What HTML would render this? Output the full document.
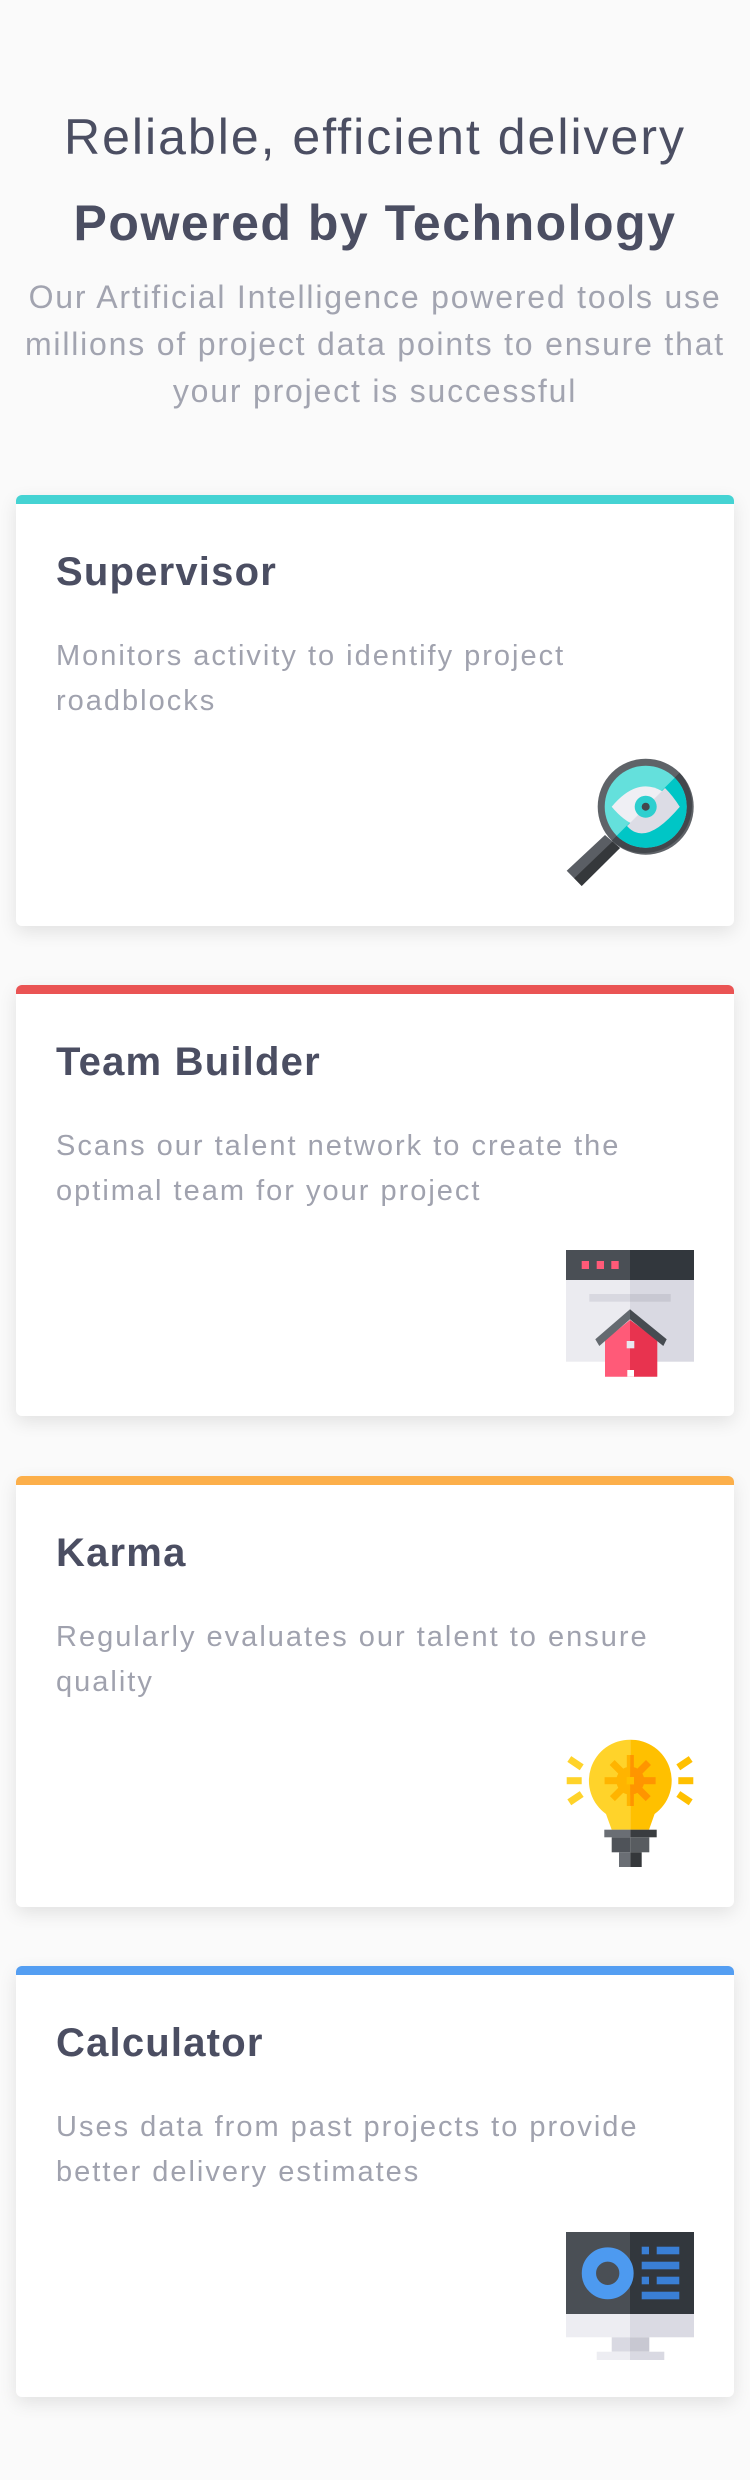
<!DOCTYPE html>
<html><head><meta charset="utf-8"><style>
*{margin:0;padding:0;box-sizing:border-box}
body{width:750px;height:2480px;background:#fafafa;font-family:"Liberation Sans",sans-serif;position:relative;overflow:hidden}
.h1{position:absolute;top:108px;left:0;width:750px;text-align:center;font-size:50px;color:#4b4e62;letter-spacing:2px}
.h2{position:absolute;top:194px;left:0;width:750px;text-align:center;font-size:50px;font-weight:bold;color:#4b4e62;letter-spacing:1.5px}
.p{position:absolute;top:274px;left:0;width:750px;text-align:center;font-size:32px;line-height:47px;color:#a2a4b0;letter-spacing:1.8px;white-space:nowrap}
.card{position:absolute;left:16px;width:718px;height:431px;background:#fff;border-radius:6px;border-top:9px solid;box-shadow:0 6px 18px rgba(0,0,0,0.10)}
.card h3{position:absolute;left:40px;top:46px;font-size:40px;font-weight:bold;color:#4b4e62;letter-spacing:1.2px}
.card p{position:absolute;left:40px;top:130px;width:660px;font-size:29px;line-height:45px;color:#a0a2ae;letter-spacing:2px;white-space:nowrap}
.card svg{position:absolute;left:550px;width:128px;height:128px}
</style></head><body>
<div class="h1">Reliable, efficient delivery</div>
<div class="h2">Powered by Technology</div>
<div class="p">Our Artificial Intelligence powered tools use<br>millions of project data points to ensure that<br>your project is successful</div>

<div class="card" style="top:495px;border-color:#45d3d3">
<h3>Supervisor</h3>
<p>Monitors activity to identify project<br>roadblocks</p>
<svg viewBox="0 0 128 128" style="top:254px">
<polygon points="39,77 54,90 15.7,128 0.7,112.7" fill="#5a5e64"/>
<polygon points="46.5,83.5 54,90 15.7,128 8.2,120.3" fill="#35383b"/>
<circle cx="79.7" cy="48.7" r="48" fill="#5f6368"/>
<path d="M113.6,14.8 A48,48 0 0 1 45.8,82.6 Z" fill="#43474c"/>
<circle cx="79.7" cy="48.7" r="41" fill="#64e0dc"/>
<path d="M108.7,19.7 A41,41 0 0 1 50.7,77.7 Z" fill="#00c6c6"/>
<path d="M45.7,48.7 Q79.7,8 113.7,48.7 Q79.7,89.4 45.7,48.7 Z" fill="#efeff4"/>
<path d="M99,30 Q107,38 113.7,48.7 Q79.7,89.4 61,68 Z" fill="#dcdce5"/>
<circle cx="79.7" cy="48.7" r="11" fill="#2dcfcf"/>
<circle cx="79.7" cy="48.7" r="4" fill="#43474c"/>
</svg>
</div>

<div class="card" style="top:985px;border-color:#ea5454">
<h3>Team Builder</h3>
<p>Scans our talent network to create the<br>optimal team for your project</p>
<svg viewBox="0 0 128 128" style="top:256px">
<rect x="0" y="0" width="64" height="111.7" fill="#ebebf0"/>
<rect x="64" y="0" width="64" height="111.7" fill="#d9d9e2"/>
<rect x="0" y="0" width="64" height="30" fill="#4a4f55"/>
<rect x="64" y="0" width="64" height="30" fill="#32373d"/>
<rect x="15.7" y="11" width="7.3" height="8" fill="#ff5a78"/>
<rect x="30.7" y="11" width="7.3" height="8" fill="#ff5a78"/>
<rect x="45.3" y="11" width="7.4" height="8" fill="#ff5a78"/>
<rect x="23.3" y="44" width="40.7" height="7.7" fill="#d8d8e0"/>
<rect x="64" y="44" width="40.7" height="7.7" fill="#c8c8d2"/>
<polygon points="39,90 64,70 64,126.7 39,126.7" fill="#ff5a78"/>
<polygon points="64,70 91.3,90 91.3,126.7 64,126.7" fill="#e8334f"/>
<rect x="61.3" y="120" width="6.7" height="6.7" fill="#fff"/>
<rect x="60.7" y="91" width="7.6" height="7.3" fill="#e8e8ef"/>
<polygon points="29.3,89.3 64,59.3 64,69.3 33.3,96" fill="#646a70"/>
<polygon points="64,59.3 100.7,89.3 97.3,96 64,69.3" fill="#464b51"/>
</svg>
</div>

<div class="card" style="top:1476px;border-color:#fcaf4a">
<h3>Karma</h3>
<p>Regularly evaluates our talent to ensure<br>quality</p>
<svg viewBox="0 0 128 128" style="top:254px">
<defs><clipPath id="rh"><rect x="64.3" y="0" width="64" height="128"/></clipPath></defs>
<g stroke-width="7">
<line x1="3.3" y1="20" x2="15.7" y2="28.3" stroke="#ffd32a"/>
<line x1="0.7" y1="41.7" x2="15.7" y2="41.7" stroke="#ffd32a"/>
<line x1="3.3" y1="63.3" x2="15.7" y2="55" stroke="#ffd32a"/>
<line x1="124.7" y1="20" x2="112.3" y2="28.3" stroke="#ffc000"/>
<line x1="127.3" y1="41.7" x2="112.3" y2="41.7" stroke="#ffc000"/>
<line x1="124.7" y1="63.3" x2="112.3" y2="55" stroke="#ffc000"/>
</g>
<path d="M64.3,0.7 A41,41 0 0 0 40,75 L45.7,90.7 L64.3,90.7 Z" fill="#ffd32a"/>
<path d="M64.3,0.7 A41,41 0 0 1 88.6,75 L83,90.7 L64.3,90.7 Z" fill="#ffc000"/>
<g id="gear" fill="#ffb400">
<circle cx="64.3" cy="41.7" r="14"/>
<rect x="60.8" y="16" width="7" height="51"/>
<rect x="38.6" y="38.2" width="51" height="7"/>
<rect x="60.8" y="16" width="7" height="51" transform="rotate(45 64.3 41.7)"/>
<rect x="60.8" y="16" width="7" height="51" transform="rotate(-45 64.3 41.7)"/>
</g>
<g clip-path="url(#rh)" fill="#ff9500">
<circle cx="64.3" cy="41.7" r="14"/>
<rect x="60.8" y="16" width="7" height="51"/>
<rect x="38.6" y="38.2" width="51" height="7"/>
<rect x="60.8" y="16" width="7" height="51" transform="rotate(45 64.3 41.7)"/>
<rect x="60.8" y="16" width="7" height="51" transform="rotate(-45 64.3 41.7)"/>
</g>
<rect x="60.6" y="38" width="7.4" height="7.4" fill="#ffc000"/>
<rect x="38.3" y="90.7" width="26" height="7.6" fill="#6a6e74"/>
<rect x="64.3" y="90.7" width="26.4" height="7.6" fill="#3a3d40"/>
<rect x="45.7" y="98.3" width="18.6" height="15" fill="#4f5359"/>
<rect x="64.3" y="98.3" width="19" height="15" fill="#585c60"/>
<rect x="53" y="113.3" width="11.3" height="15" fill="#6a6e74"/>
<rect x="64.3" y="113.3" width="11.4" height="15" fill="#35383b"/>
</svg>
</div>

<div class="card" style="top:1966px;border-color:#549ef2">
<h3>Calculator</h3>
<p>Uses data from past projects to provide<br>better delivery estimates</p>
<svg viewBox="0 0 128 128" style="top:257px">
<rect x="0" y="0" width="64" height="82" fill="#4a4f55"/>
<rect x="64" y="0" width="64" height="82" fill="#32373d"/>
<rect x="0" y="82" width="64" height="23.3" fill="#ededf2"/>
<rect x="64" y="82" width="64" height="23.3" fill="#dadae3"/>
<rect x="45.7" y="105.3" width="18.3" height="14.4" fill="#d9d9e2"/>
<rect x="64" y="105.3" width="19.3" height="14.4" fill="#c8c8d2"/>
<rect x="30.7" y="119.7" width="33.3" height="8.3" fill="#ededf2"/>
<rect x="64" y="119.7" width="34.3" height="8.3" fill="#d9d9e2"/>
<circle cx="41.7" cy="41.3" r="18.8" fill="none" stroke="#4d9af0" stroke-width="14.3"/>
<g fill="#3a7fd5">
<rect x="75.7" y="14.7" width="7.3" height="7.6"/>
<rect x="90.7" y="14.7" width="22.6" height="7.6"/>
<rect x="75.7" y="29.7" width="37.6" height="7.6"/>
<rect x="75.7" y="44.7" width="7.3" height="7.6"/>
<rect x="90.7" y="44.7" width="22.6" height="7.6"/>
<rect x="75.7" y="59.7" width="37.6" height="7.6"/>
</g>
</svg>
</div>
</body></html>
